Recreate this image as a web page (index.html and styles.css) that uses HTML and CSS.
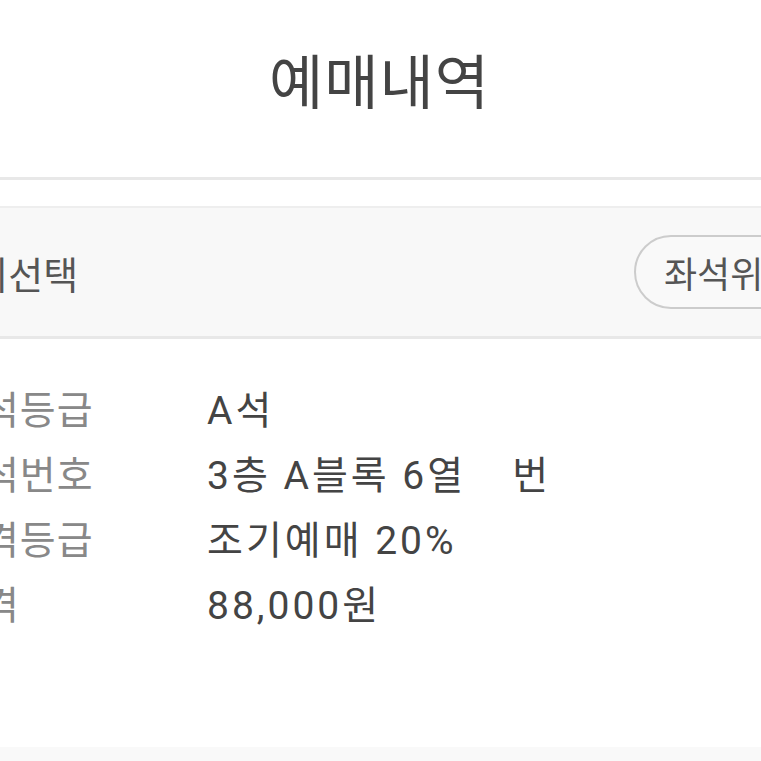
FILE: index.html
```html
<!DOCTYPE html>
<html lang="ko">
<head>
<meta charset="UTF-8">
<meta name="viewport" content="width=device-width, initial-scale=1.0">
<title>예매내역</title>
<link rel="stylesheet" href="styles.css">
</head>
<body>

<!-- Header -->
<header class="header">
    <h1 class="title">예매내역</h1>
</header>

<div class="spacer"></div>

<!-- Seat selection -->
<section class="panel">
    <span class="panel-title">좌석 미선택</span>
    <button class="seat-btn">좌석위치보기</button>
</section>

<!-- Booking details -->
<div class="details">
    <div class="row">
        <span class="label">좌석등급</span>
        <span class="value">A석</span>
    </div>
    <div class="row">
        <span class="label">좌석번호</span>
        <span class="value">3층 A블록 6열<span class="seat-no"></span>번</span>
    </div>
    <div class="row">
        <span class="label">가격등급</span>
        <span class="value">조기예매 20%</span>
    </div>
    <div class="row">
        <span class="label">가격</span>
        <span class="value">88,000원</span>
    </div>
</div>

<div class="footer"></div>

</body>
</html>
```
FILE: styles.css
```css
/* Booking history page */
body {
    margin: 0;
    overflow: hidden;
    background-color: #fff;
    font-family: Roboto, "Noto Sans CJK KR", sans-serif;
    color: #444;
}

.header {
    height: 177px;
    display: flex;
    align-items: center;
    justify-content: center;
    border-bottom: 3px solid #e8e8e8;
}

.title {
    margin: 0 0 20px -2px;
    font-size: 59px;
    font-weight: 400;
    letter-spacing: 1px;
    color: #444;
}

.spacer {
    height: 26px;
}

.panel {
    display: flex;
    align-items: center;
    height: 128px;
    background-color: #f8f8f8;
    border-top: 2px solid #eee;
    border-bottom: 3px solid #e8e8e8;
}

.panel-title {
    flex-shrink: 0;
    width: 740px;
    margin-left: -106px;
    font-size: 38px;
    color: #555;
    white-space: nowrap;
}

.seat-btn {
    flex-shrink: 0;
    height: 74px;
    padding: 0 28px;
    border: 2px solid #ccc;
    border-radius: 37px;
    background-color: #f9f9f9;
    font-family: inherit;
    font-size: 36px;
    color: #555;
    white-space: nowrap;
}

.details {
    padding-top: 35px;
}

.row {
    display: flex;
    height: 65px;
    align-items: center;
    font-size: 39px;
    white-space: nowrap;
}

.label {
    flex-shrink: 0;
    width: 261px;
    margin-left: -54px;
    letter-spacing: 1px;
    color: #888;
}

.value {
    letter-spacing: 3px;
    color: #444;
}

.seat-no {
    display: inline-block;
    width: 46px;
}

.footer {
    margin-top: 113px;
    height: 20px;
    background-color: #f9f9f9;
}
```
